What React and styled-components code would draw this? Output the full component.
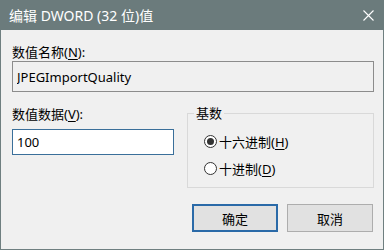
import styled, { createGlobalStyle } from "styled-components";

const Global = createGlobalStyle`
  * { box-sizing: border-box; }
  body {
    margin: 0;
    background: #ffffff;
    font-family: "Noto Sans", "Noto Sans CJK SC", sans-serif;
  }
`

const Window = styled.div`
  width: 384px;
  height: 250px;
  background: #f0f0f0;
  border: 1px solid #6f7f80;
  border-top: none;
  display: flex;
  flex-direction: column;
`
const TitleBar = styled.div`
  height: 30px;
  margin: 0 -1px;
  background: #6b7b7c;
  color: #ffffff;
  display: flex;
  align-items: center;
  justify-content: space-between;
  padding: 0 10px 0 9px;
  font-size: 14px;
`
const Close = styled.svg`
  width: 11px;
  height: 11px;
`
const Body = styled.div`
  padding: 14px 9px 0 11px;
  display: flex;
  flex-direction: column;
  font-size: 13px;
  color: #000;
`
const Label = styled.div`
  height: 16px;
  line-height: 16px;
  white-space: nowrap;
`
const Key = styled.span`
  text-decoration: underline;
  text-underline-offset: 2px;
`
const Input = styled.input`
  display: block;
  width: ${props => props.width};
  height: ${props => props.height};
  margin-top: ${props => props.top};
  padding: 0 4px;
  font: inherit;
  color: #000;
  background: ${props => props.readOnly ? "#f0f0f0" : "#ffffff"};
  border: 1px solid ${props => props.readOnly ? "#8c8c8c" : "#3a6f9a"};
  border-radius: 0;
  outline: none;
`
const Row = styled.div`
  display: flex;
  gap: 13px;
  margin-top: 14px;
`
const Column = styled.div`
  display: flex;
  flex-direction: column;
`
const Group = styled.fieldset`
  width: 188px;
  height: 83px;
  margin: -1px 0 0;
  padding: 12px 0 0 16px;
  border: 1px solid #d9d9d9;
  display: flex;
  flex-direction: column;
  gap: 11px;
`
const Legend = styled.legend`
  margin-left: -10px;
  padding: 0 2px;
  line-height: 16px;
`
const Radio = styled.div`
  display: flex;
  align-items: center;
  gap: 2px;
  height: 16px;
`
const Dot = styled.span`
  width: 13px;
  height: 13px;
  border-radius: 50%;
  border: 1px solid #333;
  background: #fff;
  display: flex;
  align-items: center;
  justify-content: center;
  &::after {
    content: "";
    width: 7px;
    height: 7px;
    border-radius: 50%;
    background: ${props => props.checked ? "#333" : "transparent"};
  }
`
const RadioText = styled.span`
  white-space: nowrap;
`
const Buttons = styled.div`
  display: flex;
  justify-content: flex-end;
  gap: 9px;
  margin-top: 16px;
  padding-right: 1px;
`
const Button = styled.button`
  width: 86px;
  height: 28px;
  font: inherit;
  color: #000;
  background: #e1e1e1;
  border: ${props => props.primary ? "2px solid #2a6aa8" : "1px solid #adadad"};
  border-radius: 0;
  padding: 0;
`

export default function App() {
    return (
        <>
            <Global />
            <Window>
                <TitleBar>
                    <span>编辑 DWORD (32 位)值</span>
                    <Close viewBox="0 0 11 11">
                        <path d="M0.5 0.5 L10.5 10.5 M10.5 0.5 L0.5 10.5" stroke="#fff" strokeWidth="1.1" fill="none" />
                    </Close>
                </TitleBar>
                <Body>
                    <Label>数值名称(<Key>N</Key>):</Label>
                    <Input readOnly value="JPEGImportQuality" width="362px" height="31px" top="1px" />
                    <Row>
                        <Column>
                            <Label>数值数据(<Key>V</Key>):</Label>
                            <Input defaultValue="100" width="162px" height="26px" top="7px" />
                        </Column>
                        <Group>
                            <Legend>基数</Legend>
                            <Radio><Dot checked /><RadioText>十六进制(<Key>H</Key>)</RadioText></Radio>
                            <Radio><Dot /><RadioText>十进制(<Key>D</Key>)</RadioText></Radio>
                        </Group>
                    </Row>
                    <Buttons>
                        <Button primary>确定</Button>
                        <Button>取消</Button>
                    </Buttons>
                </Body>
            </Window>
        </>
    )
}
